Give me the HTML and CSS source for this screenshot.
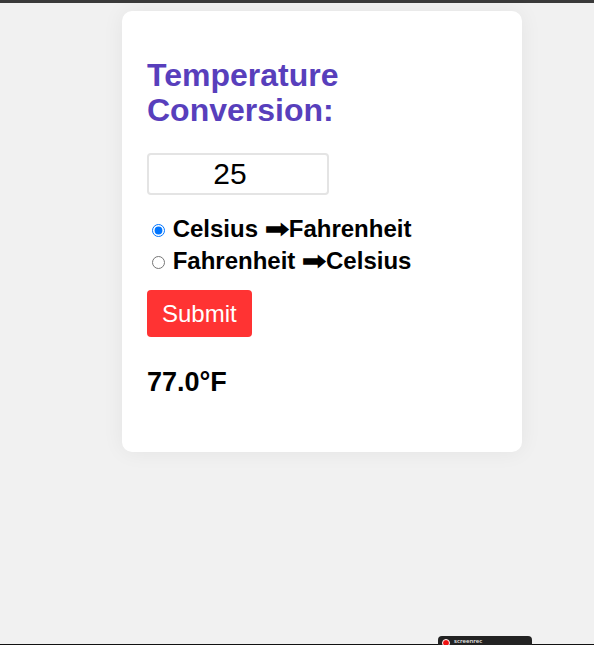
FILE: index.html
```html
<!DOCTYPE html>
<html lang="en">
<head>
<meta charset="utf-8">
<title>Temperature Conversion</title>
<link rel="stylesheet" href="styles.css">
</head>
<body>
<div class="topbar"></div>
<main class="page">
  <section class="card">
    <h1 class="title">Temperature Conversion:</h1>
    <input class="temp-input" type="text" value="25">
    <div class="options">
      <label class="option"><input type="radio" name="dir" checked> Celsius <span class="arrow">➡</span>Fahrenheit</label>
      <label class="option"><input type="radio" name="dir"> Fahrenheit <span class="arrow">➡</span>Celsius</label>
    </div>
    <button class="submit" type="button">Submit</button>
    <p class="result">77.0°F</p>
  </section>
</main>
<div class="rec-line"></div>
<div class="rec-badge"><span class="rec-dot"></span><span class="rec-text">screenrec</span></div>
</body>
</html>
```
FILE: styles.css
```css
html, body {
  margin: 0;
  padding: 0;
  background: #f1f1f1;
  font-family: "Liberation Sans", Arial, sans-serif;
  height: 100%;
  overflow: hidden;
}

.topbar {
  height: 3px;
  background: #3a3a3a;
}

.page {
  padding: 8px 0 0 122px;
}

.card {
  width: 400px;
  box-sizing: border-box;
  background: #fff;
  border-radius: 10px;
  box-shadow: 0 0 22px rgba(0, 0, 0, 0.06);
  padding: 47px 25px 54px 25px;
  display: flex;
  flex-direction: column;
  align-items: flex-start;
}

.title {
  margin: 0;
  font-size: 32px;
  line-height: 35px;
  font-weight: bold;
  color: #583fbc;
}

.temp-input {
  margin-top: 25px;
  width: 182px;
  height: 42px;
  box-sizing: border-box;
  border: 2px solid #e4e4e4;
  border-radius: 4px;
  padding: 0 16px 0 0;
  font-family: "Liberation Sans", Arial, sans-serif;
  font-size: 30px;
  text-align: center;
  color: #000;
  outline: none;
}

.options {
  margin-top: 18px;
  display: flex;
  flex-direction: column;
}

.option {
  font-size: 24px;
  line-height: 32px;
  font-weight: bold;
  color: #000;
}

.option input {
  margin: 3px 1px 0 5px;
}

.arrow {
  display: inline-block;
  transform: scaleX(1.2);
  margin: 0 2px;
}

.submit {
  margin-top: 13px;
  background: #ff3333;
  color: #fff;
  border: none;
  border-radius: 4px;
  font-family: "Liberation Sans", Arial, sans-serif;
  font-size: 24px;
  line-height: 27px;
  padding: 10px 15px;
}

.result {
  margin: 29px 0 0 0;
  font-size: 27px;
  line-height: 32px;
  font-weight: bold;
  color: #000;
}

.rec-line {
  position: absolute;
  left: 0;
  right: 0;
  top: 644px;
  height: 1px;
  background: #111;
}

.rec-badge {
  position: absolute;
  left: 438px;
  top: 636px;
  width: 94px;
  height: 9px;
  background: #222;
  border-radius: 4px 4px 0 0;
  display: flex;
  align-items: flex-start;
  gap: 4px;
  padding: 2px 0 0 4px;
  box-sizing: border-box;
}

.rec-dot {
  width: 8px;
  height: 8px;
  border-radius: 50%;
  background: #e11;
  border: 1px solid #fff;
  box-sizing: border-box;
  margin-top: 1px;
}

.rec-text {
  color: #eee;
  font-size: 6px;
  line-height: 7px;
  font-family: "Open Sans", sans-serif;
  font-weight: 600;
}
```
